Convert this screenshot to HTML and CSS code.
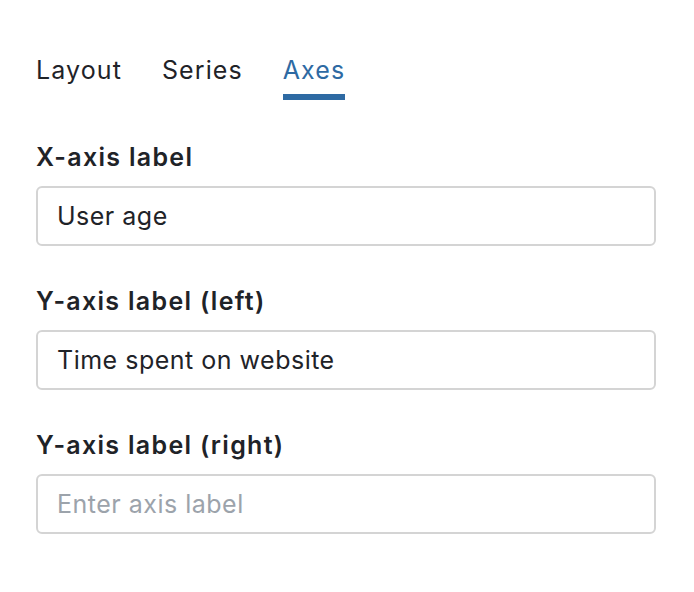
FILE: index.html
```html
<!DOCTYPE html>
<html>
<head>
<meta charset="utf-8">
<link rel="stylesheet" href="styles.css">
</head>
<body>
<div class="panel">
  <nav class="tabs">
    <div class="tab">Layout</div>
    <div class="tab">Series</div>
    <div class="tab active">Axes</div>
  </nav>
  <div class="field">
    <label class="label">X-axis label</label>
    <div class="input">User age</div>
  </div>
  <div class="field">
    <label class="label">Y-axis label (left)</label>
    <div class="input">Time spent on website</div>
  </div>
  <div class="field">
    <label class="label">Y-axis label (right)</label>
    <div class="input placeholder">Enter axis label</div>
  </div>
</div>
</body>
</html>
```
FILE: styles.css
```css
html, body {
  margin: 0;
  background: #fff;
}
body {
  font-family: Inter, "Noto Sans", sans-serif;
  color: #1f2328;
}
.panel {
  padding: 53px 38px 0 36px;
  display: flex;
  flex-direction: column;
}
.tabs {
  display: flex;
  gap: 40px;
  margin-bottom: 42px;
}
.tab {
  font-size: 25px;
  letter-spacing: 1.1px;
  line-height: 34px;
  padding-bottom: 7px;
  border-bottom: 6px solid transparent;
}
.tab.active {
  color: #2e6aa3;
  border-bottom-color: #2e6aa3;
}
.field {
  display: flex;
  flex-direction: column;
  gap: 14px;
  margin-bottom: 40px;
}
.label {
  font-size: 25px;
  font-weight: 600;
  letter-spacing: 1.3px;
  line-height: 30px;
}
.input {
  height: 56px;
  border: 2px solid #d4d4d4;
  border-radius: 6px;
  padding: 0 19px;
  font-size: 25px;
  letter-spacing: 0.5px;
  line-height: 56px;
}
.input.placeholder {
  color: #9ca3ab;
}
```
